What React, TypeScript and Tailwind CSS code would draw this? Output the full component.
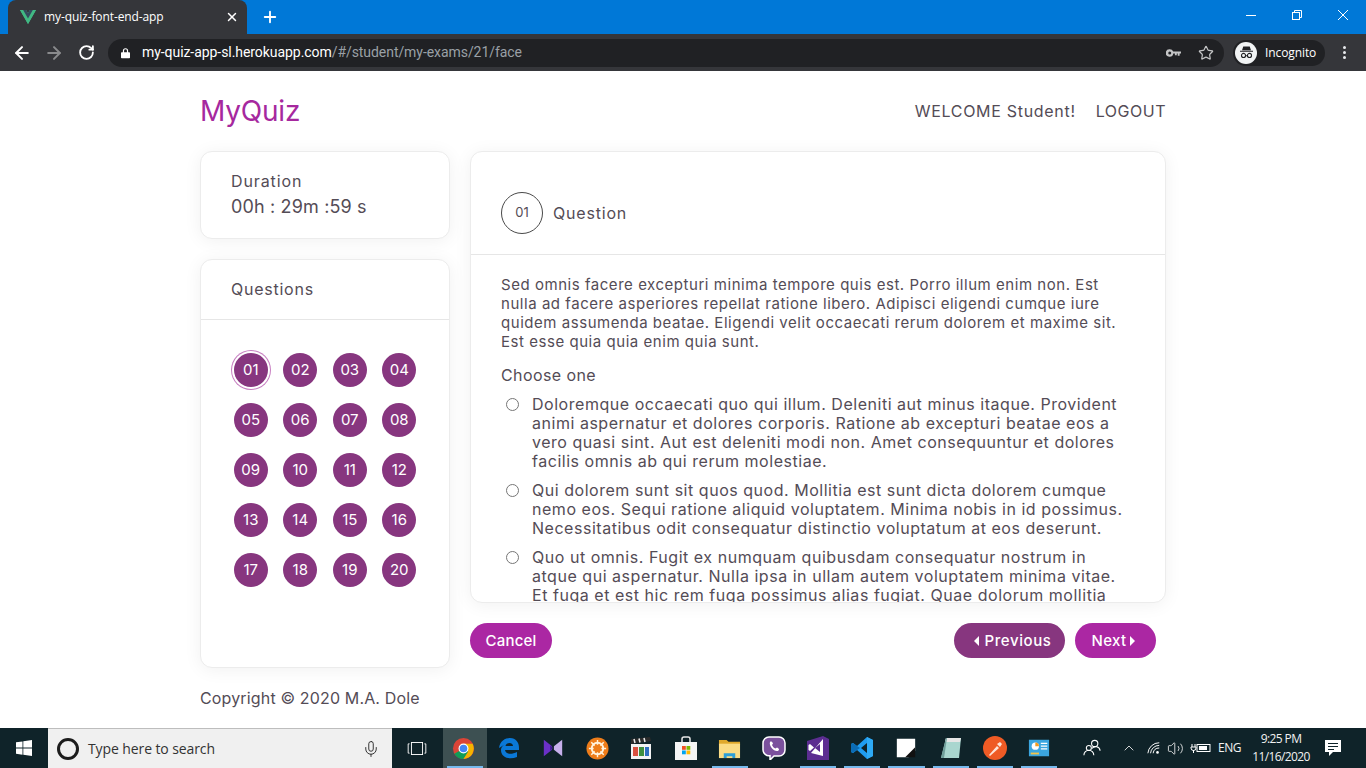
import React from 'react';
import { ArrowLeft, ArrowRight, RotateCw, Star, X, Plus, Mic, ChevronUp, Volume2 } from 'lucide-react';

const questions = Array.from({ length: 20 }, (_, i) => String(i + 1).padStart(2, '0'));

const paragraph = [
  'Sed omnis facere excepturi minima tempore quis est. Porro illum enim non. Est',
  'nulla ad facere asperiores repellat ratione libero. Adipisci eligendi cumque iure',
  'quidem assumenda beatae. Eligendi velit occaecati rerum dolorem et maxime sit.',
  'Est esse quia quia enim quia sunt.',
];

const options = [
  [
    'Doloremque occaecati quo qui illum. Deleniti aut minus itaque. Provident',
    'animi aspernatur et dolores corporis. Ratione ab excepturi beatae eos a',
    'vero quasi sint. Aut est deleniti modi non. Amet consequuntur et dolores',
    'facilis omnis ab qui rerum molestiae.',
  ],
  [
    'Qui dolorem sunt sit quos quod. Mollitia est sunt dicta dolorem cumque',
    'nemo eos. Sequi ratione aliquid voluptatem. Minima nobis in id possimus.',
    'Necessitatibus odit consequatur distinctio voluptatum at eos deserunt.',
  ],
  [
    'Quo ut omnis. Fugit ex numquam quibusdam consequatur nostrum in',
    'atque qui aspernatur. Nulla ipsa in ullam autem voluptatem minima vitae.',
    'Et fuga et est hic rem fuga possimus alias fugiat. Quae dolorum mollitia',
  ],
];

const Lines: React.FC<{ lines: string[] }> = ({ lines }) => (
  <>
    {lines.map((l, i) => (
      <span key={i} className="block whitespace-nowrap">{l}</span>
    ))}
  </>
);

const VueLogo = () => (
  <svg viewBox="0 0 256 221" className="w-[16px] h-[14px]">
    <path d="M204.8 0H256L128 220.8 0 0h97.92L128 51.2 157.44 0z" fill="#41b883" />
    <path d="M0 0l128 220.8L256 0h-51.2L128 132.48 50.56 0z" fill="#41b883" />
    <path d="M50.56 0L128 133.12 204.8 0h-47.36L128 51.2 97.92 0z" fill="#35495e" />
  </svg>
);

const BrowserChrome = () => (
  <div className="shrink-0 font-['Roboto',sans-serif]">
    <div className="h-[34px] bg-[#0078d7] flex items-end pl-[8px]">
      <div className="w-[239px] h-[34px] bg-[#35363a] rounded-t-[8px] flex items-center pl-[12px] pr-[8px]">
        <VueLogo />
        <span className="ml-[8px] text-[12px] text-white flex-1 font-['Open_Sans',sans-serif] tracking-[-0.1px]">my-quiz-font-end-app</span>
        <X size={14} strokeWidth={2.5} className="text-white" />
      </div>
      <div className="w-[46px] h-[34px] flex items-center justify-center">
        <Plus size={18} strokeWidth={2.5} className="text-white" />
      </div>
      <div className="flex-1" />
      <div className="h-[34px] flex items-start text-white">
        <div className="w-[46px] h-[30px] flex items-center justify-center"><span className="block w-[10px] h-[1px] bg-white" /></div>
        <div className="w-[46px] h-[30px] flex items-center justify-center">
          <svg viewBox="0 0 10 10" className="w-[10px] h-[10px]" fill="none" stroke="white" strokeWidth="1">
            <rect x="0.5" y="2.5" width="7" height="7" />
            <path d="M2.5 2.5v-2h7v7h-2" />
          </svg>
        </div>
        <div className="w-[46px] h-[30px] flex items-center justify-center">
          <svg viewBox="0 0 10 10" className="w-[10px] h-[10px]" fill="none" stroke="white" strokeWidth="1">
            <path d="M0 0l10 10M10 0L0 10" />
          </svg>
        </div>
      </div>
    </div>
    <div className="h-[37px] bg-[#35363a] flex items-center pl-[12px] pr-[13px]">
      <ArrowLeft size={20} strokeWidth={2.4} className="text-white" />
      <ArrowRight size={20} strokeWidth={2.4} className="text-[#8a8b8d] ml-[12px]" />
      <RotateCw size={17} strokeWidth={2.6} className="text-white ml-[14px]" />
      <div className="ml-[13px] w-[1116px] h-[28px] rounded-full bg-[#202124] flex items-center pl-[13px] pr-[10px]">
        <svg viewBox="0 0 12 14" className="w-[9px] h-[12px]" fill="white">
          <path d="M2.5 6V4a3.5 3.5 0 017 0v2H11a1 1 0 011 1v6a1 1 0 01-1 1H1a1 1 0 01-1-1V7a1 1 0 011-1zm1.6 0h3.8V4a1.9 1.9 0 00-3.8 0z" />
        </svg>
        <span className="ml-[12px] text-[14px] text-white tracking-[-0.06px]">my-quiz-app-sl.herokuapp.com<span className="text-[#9aa0a6]">/#/student/my-exams/21/face</span></span>
        <div className="flex-1" />
        <svg viewBox="0 0 16 8" className="w-[15px] h-[8px] mr-[17px]" fill="#c4c5c6">
          <path d="M4 0a4 4 0 013.7 2.5H16v2h-1.5V7h-2V4.5h-1V6.5h-2v-2H7.7A4 4 0 114 0zm0 2.4a1.6 1.6 0 100 3.2 1.6 1.6 0 000-3.2z" />
        </svg>
        <Star size={16} strokeWidth={1.8} className="text-[#c4c5c6]" />
      </div>
      <div className="ml-[9px] w-[92px] h-[26px] rounded-full bg-[#202124] flex items-center pl-[2px]">
        <div className="w-[22px] h-[22px] rounded-full bg-[#f1f3f4] flex items-center justify-center">
          <svg viewBox="0 0 16 14" className="w-[15px] h-[13px]" fill="#202124">
            <path d="M4.5 0.5h7l1.3 4H3.2zM1 5h14v1.2H1z" />
            <circle cx="4.8" cy="10.2" r="2.2" fill="none" stroke="#202124" strokeWidth="1.2" />
            <circle cx="11.2" cy="10.2" r="2.2" fill="none" stroke="#202124" strokeWidth="1.2" />
            <path d="M7 10h2v1H7z" />
          </svg>
        </div>
        <span className="ml-[8px] text-[12px] text-white font-['Open_Sans',sans-serif] tracking-[-0.1px]">Incognito</span>
      </div>
      <div className="flex-1" />
      <div className="flex flex-col gap-[2px] mr-[7px]">
        <span className="w-[3px] h-[3px] rounded-full bg-[#e8eaed]" />
        <span className="w-[3px] h-[3px] rounded-full bg-[#e8eaed]" />
        <span className="w-[3px] h-[3px] rounded-full bg-[#e8eaed]" />
      </div>
    </div>
  </div>
);

const card = 'bg-white rounded-[12px] border border-[#ececec] shadow-[0_2px_18px_rgba(0,0,0,0.06)]';

const Sidebar = () => (
  <div className="w-[250px] flex flex-col gap-[20px]">
    <div className={`${card} h-[88px] pl-[30px] pt-[18px]`}>
      <div className="text-[16px] leading-[22px] tracking-[0.9px]">Duration</div>
      <div className="text-[18px] leading-[30px] tracking-[0.15px]">00h : 29m :59 s</div>
    </div>
    <div className={`${card} h-[409px]`}>
      <div className="h-[60px] border-b border-[#e6e6e6] pl-[30px] pt-[17px] text-[16px] leading-[24px] tracking-[0.75px]">Questions</div>
      <div className="grid grid-cols-4 auto-rows-[50px] w-[198px] ml-[25px] mt-[25px]">
        {questions.map((q) => (
          <div key={q} className="flex items-center justify-center">
            <div className={`w-[34px] h-[34px] rounded-full bg-[#87367f] text-white text-[15px] flex items-center justify-center ${q === '01' ? 'shadow-[0_0_0_2px_#fff,0_0_0_3px_#c77fc1]' : ''}`}>
              {q}
            </div>
          </div>
        ))}
      </div>
    </div>
  </div>
);

const QuestionCard = () => (
  <div className={`${card} h-[452px] overflow-hidden`}>
    <div className="h-[103px] border-b border-[#e6e6e6] pl-[30px] pt-[40px] flex items-start">
      <div className="w-[42px] h-[42px] rounded-full border border-[#4a4a4a] text-[13px] flex items-center justify-center">01</div>
      <span className="ml-[10px] mt-[9px] text-[16px] leading-[24px] tracking-[0.8px]">Question</span>
    </div>
    <div className="pl-[30px] pt-[20px]">
      <div className="text-[15px] leading-[19px] tracking-[0.54px]"><Lines lines={paragraph} /></div>
      <div className="mt-[15px] text-[16px] leading-[19px] tracking-[0.4px]">Choose one</div>
      <div className="mt-[10px]">
        {options.map((opt, i) => (
          <div key={i} className="flex mb-[10px]">
            <span className="ml-[5px] mt-[3px] w-[13px] h-[13px] rounded-full border border-[#767676] bg-white shrink-0" />
            <div className="ml-[13px] text-[16px] leading-[19px] tracking-[0.53px]"><Lines lines={opt} /></div>
          </div>
        ))}
      </div>
    </div>
  </div>
);

const Actions = () => (
  <div className="mt-[20px] flex items-center text-[15px] font-medium text-white">
    <button className="w-[82px] h-[35px] pt-[2px] rounded-full bg-[#ab27a3] tracking-[0.2px]">Cancel</button>
    <div className="flex-1" />
    <button className="w-[111px] h-[35px] pt-[2px] pl-[7px] rounded-full bg-[#87367f] flex items-center justify-center gap-[5px] tracking-[0.6px]">
      <span className="w-0 h-0 border-y-[5px] border-y-transparent border-r-[5px] border-r-white -mt-[2px]" />
      Previous
    </button>
    <button className="ml-[10px] mr-[10px] w-[81px] h-[35px] pt-[2px] pr-[4px] rounded-full bg-[#ab27a3] flex items-center justify-center gap-[4px] tracking-[0.3px]">
      Next
      <span className="w-0 h-0 border-y-[5px] border-y-transparent border-l-[5px] border-l-white -mt-[2px]" />
    </button>
  </div>
);

const tileIcons: React.ReactNode[] = [
  // chrome
  <svg viewBox="0 0 24 24" className="w-[23px] h-[23px] -ml-[2px]" key="chrome">
    <circle cx="12" cy="12" r="11" fill="#db4437" />
    <path d="M12 12L2.5 17.5A11 11 0 0012 23l5-8z" fill="#0f9d58" />
    <path d="M12 7h9.5A11 11 0 0112 23l5-8z" fill="#f4b400" />
    <circle cx="12" cy="12" r="5.2" fill="#fff" />
    <circle cx="12" cy="12" r="4" fill="#4285f4" />
  </svg>,
  // edge
  <svg viewBox="0 0 24 24" className="w-[24px] h-[24px]" key="edge">
    <path d="M2 12C3 5 8 2 13 2c6 0 9 4.500 9 10v2H8c.5 4 6 5 12 2v5c-7 3-16 1-16-7 0-2 1-4 3-5-2 1-3 2-5 3zM8.500 10h7.500c0-4-7-4-7.500 0z" fill="#0a78d7" />
  </svg>,
  // vs preview
  <svg viewBox="0 0 24 24" className="w-[22px] h-[22px]" key="vsp">
    <path d="M2 3l9 7v4l-9 7z" fill="#6b30c8" />
    <path d="M22 3l-9 7v4l9 7z" fill="#c7b0ec" />
    <path d="M9 9l3 3-3 3z" fill="#3c1b8a" />
  </svg>,
  // orange wheel
  <svg viewBox="0 0 24 24" className="w-[23px] h-[23px]" key="wheel">
    <circle cx="12" cy="12" r="11.500" fill="#ee7d1a" />
    <circle cx="12" cy="12" r="6" fill="none" stroke="#fff2dc" strokeWidth="2" />
    <path d="M12 3v5M12 16v5M3 12h5M16 12h5M5.500 5.500l3.500 3.500M15 15l3.500 3.500M18.500 5.500L15 9M9 15l-3.500 3.500" stroke="#fff2dc" strokeWidth="1.500" />
  </svg>,
  // clapper
  <svg viewBox="0 0 24 24" className="w-[24px] h-[24px]" key="clap">
    <path d="M2 3l19-2 1 4-20 3z" fill="#2c2c2c" />
    <path d="M5 3l1 4M10 2.500l1 4M15 2l1 4" stroke="#eee" strokeWidth="1.500" />
    <rect x="2" y="8" width="20" height="15" fill="#f3f3f3" />
    <rect x="4" y="11" width="5" height="9" fill="#d9503f" />
    <rect x="10" y="11" width="5" height="9" fill="#3f8f3f" />
    <rect x="16" y="11" width="4" height="9" fill="#2f6fc0" />
  </svg>,
  // store
  <svg viewBox="0 0 24 24" className="w-[24px] h-[24px]" key="store">
    <path d="M8 7V3a2 2 0 012-2h4a2 2 0 012 2v4" fill="none" stroke="#e8e8e8" strokeWidth="1.500" />
    <rect x="1" y="6" width="22" height="18" fill="#f5f5f5" />
    <rect x="8" y="10" width="3.800" height="3.800" fill="#f25022" />
    <rect x="12.500" y="10" width="3.800" height="3.800" fill="#7fba00" />
    <rect x="8" y="14.500" width="3.800" height="3.800" fill="#00a4ef" />
    <rect x="12.500" y="14.500" width="3.800" height="3.800" fill="#ffb900" />
  </svg>,
  // folder
  <svg viewBox="0 0 24 24" className="w-[23px] h-[23px]" key="folder">
    <path d="M1 3h8l2 2h12v3H1z" fill="#e0a92c" />
    <rect x="1" y="7" width="22" height="15" fill="#fbdc85" />
    <path d="M6 22v-5h12v5h-3v-2H9v2z" fill="#2d9fd8" />
  </svg>,
  // viber
  <svg viewBox="0 0 24 24" className="w-[24px] h-[24px]" key="viber">
    <path d="M7 1h10a6 6 0 016 6v7a6 6 0 01-6 6h-5l-4 4v-4.300A6 6 0 011 14V7a6 6 0 016-6z" fill="#7b519d" stroke="#fff" strokeWidth="1.500" />
    <path d="M8 6c1-1 2-.5 3 1.500l-1 1.500c.5 1.500 2 3 3.500 3.500l1.500-1c2 1 2.500 2 1.500 3-3 2.500-10-4-8.500-8.500z" fill="#fff" />
  </svg>,
  // visual studio
  <svg viewBox="0 0 24 24" className="w-[24px] h-[24px]" key="vs">
    <path d="M1 5L17 0l6 3v21H1z" fill="#5c2d91" />
    <path d="M17 3v17L5 17l12-14zM4 8l4 3.500-4 3.500-1.500-1V9z" fill="#fff" />
    <path d="M9 12l5-4v8z" fill="#5c2d91" />
  </svg>,
  // vscode
  <svg viewBox="0 0 24 24" className="w-[24px] h-[24px]" key="vsc">
    <path d="M17 1l6 3v16l-6 3-10-9-4 3-2-1V8l2-1 4 3zM17 7l-6 5 6 5z" fill="#1f9cf0" />
    <path d="M17 1l6 3v16l-6 3z" fill="#2eaaf5" />
    <path d="M7 10L3 7 1 8v8l2 1 4-3 3-2z" fill="#0b6cb5" />
  </svg>,
  // sticky
  <svg viewBox="0 0 24 24" className="w-[20px] h-[20px]" key="sticky">
    <path d="M1 1h22v14l-8 8H1z" fill="#fff" />
    <path d="M23 23V11L11 23z" fill="#111" />
  </svg>,
  // notes
  <svg viewBox="0 0 24 24" className="w-[24px] h-[24px]" key="notes">
    <path d="M7 2h15l-2 20H2z" fill="#a9d6cf" />
    <path d="M7 2h15l-1 4H6z" fill="#e6e6e6" />
    <path d="M2 22l5-20 1 0-3 20z" fill="#6f9e9a" />
  </svg>,
  // postman
  <svg viewBox="0 0 24 24" className="w-[24px] h-[24px]" key="postman">
    <circle cx="12" cy="12" r="12" fill="#ef5b25" />
    <path d="M6 19l8-9 2 2-9 8zM14 8l3-2 2 2-2 3z" fill="#fde6da" />
  </svg>,
  // dashboard
  <svg viewBox="0 0 24 24" className="w-[22px] h-[22px]" key="dash">
    <rect x="1" y="3" width="22" height="18" fill="#3ba6e0" />
    <circle cx="8" cy="10" r="4" fill="#fff" />
    <path d="M8 10V6a4 4 0 014 4z" fill="#f39c1f" />
    <path d="M14 7h7M14 10h7M14 13h7" stroke="#fff" strokeWidth="1.500" />
    <rect x="3" y="17" width="9" height="2" fill="#f3c34a" />
  </svg>,
];

const running = [0, 6, 8, 9, 10, 11, 12, 13];

const Taskbar = () => (
  <div className="h-[40px] shrink-0 bg-[#0f2329] flex items-stretch text-white font-['Open_Sans',sans-serif]">
    <div className="w-[48px] flex items-center justify-center">
      <svg viewBox="0 0 16 16" className="w-[16px] h-[16px]" fill="white">
        <path d="M0 2.300l6.500-.9v6.200H0zM7.300 1.300L16 0v7.600H7.300zM0 8.400h6.500v6.300L0 13.800zM7.300 8.400H16V16l-8.700-1.200z" />
      </svg>
    </div>
    <div className="w-[344px] bg-[#f0f0f0] border-t border-[#bdbdbd] flex items-center pl-[9px] pr-[12px]">
      <div className="w-[22px] h-[22px] rounded-full border-[3px] border-[#1c1c1c]" />
      <span className="ml-[9px] text-[14px] text-[#333] flex-1 tracking-[-0.1px]">Type here to search</span>
      <Mic size={18} strokeWidth={1.2} className="text-[#222]" />
    </div>
    <div className="w-[50.5px] flex items-center justify-center">
      <svg viewBox="0 0 20 14" className="w-[20px] h-[13px]" fill="none" stroke="white" strokeWidth="1">
        <rect x="4" y="0.500" width="12" height="13" />
        <path d="M2 2H0.500v10H2M18 2h1.500v10H18" />
      </svg>
    </div>
    <div className="flex">
      {tileIcons.map((icon, i) => (
        <div key={i} className={`w-[44.2px] relative flex items-center justify-center ${i === 0 ? 'bg-[#3d5052]' : ''}`}>
          {icon}
          {running.includes(i) && <span className="absolute bottom-0 left-[4px] right-[4px] h-[2px] bg-[#76b9ed]" />}
        </div>
      ))}
    </div>
    <div className="flex-1" />
    <div className="flex items-center w-[286px] text-[#f2f2f2]">
      <svg viewBox="0 0 20 20" className="w-[18px] h-[18px] ml-[3px]" fill="none" stroke="white" strokeWidth="1.200">
        <circle cx="13" cy="5" r="3.500" />
        <circle cx="6.500" cy="10" r="2.800" />
        <path d="M1 18a5.500 5.500 0 0111 0M10 10.500a5 5 0 019 2.500" />
      </svg>
      <ChevronUp size={16} strokeWidth={1.3} className="ml-[20px]" />
      <svg viewBox="0 0 16 16" className="w-[14px] h-[14px] ml-[10px]" fill="none" stroke="white" strokeWidth="1.100">
        <path d="M1 14A13 13 0 0114 2M4 14a10 10 0 0110-9M7 14a7 7 0 017-6" />
        <circle cx="12" cy="13" r="1.500" fill="white" stroke="none" />
      </svg>
      <Volume2 size={17} strokeWidth={1.2} className="ml-[6px]" />
      <svg viewBox="0 0 22 12" className="w-[22px] h-[12px] ml-[6px]" fill="none" stroke="white" strokeWidth="1">
        <rect x="7" y="2.500" width="13" height="7" />
        <rect x="9" y="4" width="8" height="4" fill="white" stroke="none" />
        <path d="M2 2v3M5 2v3M1 5h5v1a2 2 0 01-5 0zM3.500 8v3" />
      </svg>
      <span className="ml-[6px] text-[12px] w-[30px] tracking-[-0.5px]">ENG</span>
      <div className="-ml-[1px] w-[68px] text-center text-[12px] leading-[18px] tracking-[-0.6px]">
        <div>9:25 PM</div>
        <div>11/16/2020</div>
      </div>
      <svg viewBox="0 0 16 16" className="w-[16px] h-[16px] ml-[10px]" fill="white">
        <path d="M0 0h16v12h-8l-4 4v-4H0z" />
        <path d="M3 3.500h10M3 6.500h10M3 9.500h6" stroke="#0f2329" strokeWidth="1" />
      </svg>
    </div>
  </div>
);

export default function App() {
  return (
    <div className="w-[1366px] h-[768px] flex flex-col overflow-hidden bg-white">
      <BrowserChrome />
      <div className="flex-1 font-['Inter',sans-serif] text-[#544c56]">
        <div className="w-[966px] ml-[200px]">
          <div className="h-[80px] flex items-center justify-between">
            <span className="text-[28px] text-[#a6289e] tracking-[-0.2px]">MyQuiz</span>
            <div className="flex gap-[20px] text-[16px]">
              <span className="tracking-[0.7px]">WELCOME Student!</span>
              <span className="tracking-[0.5px]">LOGOUT</span>
            </div>
          </div>
          <div className="flex gap-[20px]">
            <Sidebar />
            <div className="flex-1">
              <QuestionCard />
              <Actions />
            </div>
          </div>
          <div className="mt-[20px] text-[16px] leading-[20px] tracking-[0.15px]">Copyright © 2020 M.A. Dole</div>
        </div>
      </div>
      <Taskbar />
    </div>
  );
}
